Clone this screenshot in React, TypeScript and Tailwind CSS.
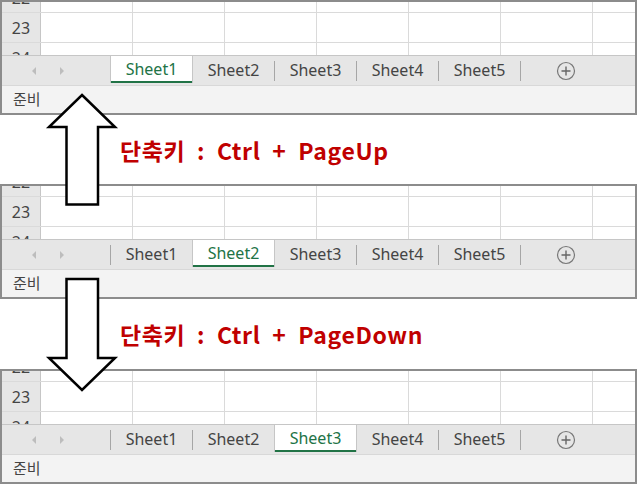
const sheets = ["Sheet1", "Sheet2", "Sheet3", "Sheet4", "Sheet5"];
const cols = [0, 1, 2, 3, 4, 5, 6];

const GridRow = ({ n }: { n: number }) => (
  <div className="flex h-[30px] border-b border-[#dadada]">
    <div className="w-[39px] shrink-0 flex items-center justify-center bg-[#e6e6e6] border-r border-[#c6c6c6] text-[16px] text-[#444]">
      {n}
    </div>
    {cols.map((c) => (
      <div key={c} className="w-[92px] shrink-0 border-r border-[#dadada]" />
    ))}
  </div>
);

const Boundary = ({ full }: { full: boolean }) =>
  full ? (
    <div className="w-px h-[27px] self-start bg-[#c6c6c6]" />
  ) : (
    <div className="w-px h-[20px] self-center bg-[#a6a6a6]" />
  );

const Panel = ({ active }: { active: number }) => (
  <div
    className="h-[115px] w-full border-2 border-[#8c8c8c] flex flex-col overflow-hidden bg-white"
    style={{ fontFamily: '"Noto Sans", "Noto Sans CJK KR", sans-serif' }}
  >
    {/* cells, rows 22-24 */}
    <div className="h-[53px] overflow-hidden">
      <div className="-mt-[19px]">
        <GridRow n={22} />
        <GridRow n={23} />
        <GridRow n={24} />
      </div>
    </div>

    {/* sheet tabs */}
    <div className="h-[30px] flex border-t border-[#c6c6c6] bg-[#e6e6e6]">
      <div className="w-[108px] shrink-0 flex items-center gap-[22px] pl-[29px]">
        <svg width="6" height="10" viewBox="0 0 6 10">
          <path d="M5 1 L1 5 L5 9 Z" fill="#bdbdbd" />
        </svg>
        <svg width="6" height="10" viewBox="0 0 6 10">
          <path d="M1 1 L5 5 L1 9 Z" fill="#bdbdbd" />
        </svg>
      </div>
      <Boundary full={active === 0} />
      {sheets.map((s, i) => (
        <div key={s} className="flex">
          {i === active ? (
            <div className="w-[81px] h-[27px] bg-white border-b-2 border-[#217346] flex items-center justify-center text-[16px] text-[#217346]">
              {s}
            </div>
          ) : (
            <div className="w-[81px] h-[27px] flex items-center justify-center text-[16px] text-[#444]">
              {s}
            </div>
          )}
          <Boundary full={i === active || i + 1 === active} />
        </div>
      ))}
      <div className="flex items-center pl-[35px]">
        <svg width="20" height="20" viewBox="0 0 20 20">
          <circle cx="10" cy="10" r="8.5" fill="none" stroke="#777" strokeWidth="1.2" />
          <path d="M10 5.5 V14.5 M5.5 10 H14.5" stroke="#666" strokeWidth="1.4" />
        </svg>
      </div>
    </div>

    {/* status bar */}
    <div className="h-[28px] flex items-center pl-[11px] bg-[#f3f3f3] border-t border-[#d8d8d8] text-[15px] text-[#444]">
      준비
    </div>
  </div>
);

const Caption = ({ text }: { text: string }) => (
  <div
    className="flex-1 flex items-center pl-[120px] text-[23px] font-bold tracking-[0.6px] [word-spacing:6px] text-[#c00000] whitespace-pre"
    style={{ fontFamily: '"Noto Sans CJK KR", "Noto Sans", sans-serif' }}
  >
    {text}
  </div>
);

export default function App() {
  return (
    <div className="relative w-[637px] h-[485px] bg-white flex flex-col">
      <Panel active={0} />
      <div className="h-[69px] flex pt-[2px]">
        <Caption text="단축키 : Ctrl + PageUp" />
      </div>
      <Panel active={1} />
      <div className="h-[70px] flex">
        <Caption text="단축키 : Ctrl + PageDown" />
      </div>
      <Panel active={2} />

      {/* arrows lying over the panels */}
      <svg
        className="absolute inset-0 pointer-events-none"
        width="637"
        height="485"
        viewBox="0 0 637 485"
      >
        <path
          d="M82 95 L115 127 L98 127 L98 204.5 L66.5 204.5 L66.5 127 L49 127 Z"
          fill="white"
          stroke="black"
          strokeWidth="2.5"
          strokeLinejoin="miter"
        />
        <path
          d="M66.5 279 L98 279 L98 358 L115 358 L82 390 L49 358 L66.5 358 Z"
          fill="white"
          stroke="black"
          strokeWidth="2.5"
          strokeLinejoin="miter"
        />
      </svg>
    </div>
  );
}
